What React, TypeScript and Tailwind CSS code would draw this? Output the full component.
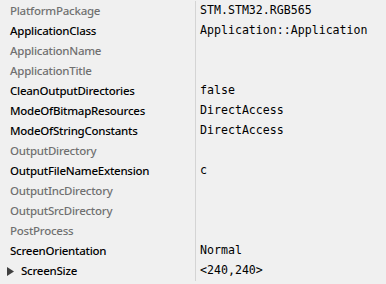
const rows: { name: string; value?: string; set?: boolean; expand?: boolean }[] = [
  { name: 'PlatformPackage', value: 'STM.STM32.RGB565' },
  { name: 'ApplicationClass', value: 'Application::Application', set: true },
  { name: 'ApplicationName' },
  { name: 'ApplicationTitle' },
  { name: 'CleanOutputDirectories', value: 'false', set: true },
  { name: 'ModeOfBitmapResources', value: 'DirectAccess', set: true },
  { name: 'ModeOfStringConstants', value: 'DirectAccess', set: true },
  { name: 'OutputDirectory' },
  { name: 'OutputFileNameExtension', value: 'c', set: true },
  { name: 'OutputIncDirectory' },
  { name: 'OutputSrcDirectory' },
  { name: 'PostProcess' },
  { name: 'ScreenOrientation', value: 'Normal', set: true },
  { name: 'ScreenSize', value: '<240,240>', set: true, expand: true },
];

export default function App() {
  return (
    <div className="h-[284px] w-[386px] overflow-hidden bg-[#f0f0f0] pt-px">
      {rows.map((r) => (
        <div key={r.name} className="flex h-5 items-center">
          <div
            className={`flex h-full w-[195px] shrink-0 items-center font-['Noto_Sans',sans-serif] text-[11.5px] font-medium tracking-[-0.25px] ${
              r.set ? 'text-black' : 'text-[#707070]'
            } ${r.expand ? 'pl-[7px]' : 'pl-[10px]'}`}
          >
            {r.expand && (
              <svg width="7" height="9" viewBox="0 0 7 9" className="mr-[7px]">
                <path d="M0 0 L7 4.5 L0 9 Z" fill="#404040" />
              </svg>
            )}
            {r.name}
          </div>
          <div className="flex h-full flex-1 items-center border-l border-[#d4d4d4] pl-[4px] font-['DejaVu_Sans_Mono',monospace] text-[11.6px] text-black">
            {r.value}
          </div>
        </div>
      ))}
    </div>
  );
}
